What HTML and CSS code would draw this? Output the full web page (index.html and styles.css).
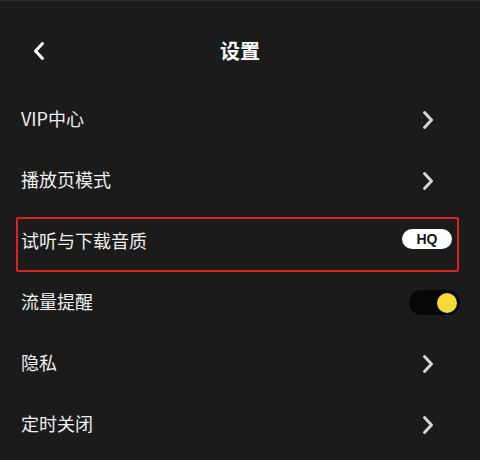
FILE: index.html
```html
<!DOCTYPE html>
<html lang="zh">
<head>
<meta charset="utf-8">
<link rel="stylesheet" href="styles.css">
</head>
<body>
<div class="screen">
  <header class="header">
    <div class="bar">
      <svg class="back" width="14" height="20" viewBox="0 0 14 20"><polyline points="10.5,2.5 3.5,10 10.5,17.5" fill="none" stroke="#fff" stroke-width="3" stroke-linecap="round" stroke-linejoin="round"/></svg>
      <div class="title">设置</div>
    </div>
  </header>
  <div class="list">
    <div class="row"><span class="label">VIP中心</span><svg class="chev" width="12" height="20" viewBox="0 0 12 20"><polyline points="2.5,2.5 9.5,10 2.5,17.5" fill="none" stroke="#d6d6d6" stroke-width="3" stroke-linecap="round" stroke-linejoin="round"/></svg></div>
    <div class="row"><span class="label">播放页模式</span><svg class="chev" width="12" height="20" viewBox="0 0 12 20"><polyline points="2.5,2.5 9.5,10 2.5,17.5" fill="none" stroke="#d6d6d6" stroke-width="3" stroke-linecap="round" stroke-linejoin="round"/></svg></div>
    <div class="row highlight"><span class="label">试听与下载音质</span><span class="pill">HQ</span></div>
    <div class="row"><span class="label">流量提醒</span><span class="toggle"><span class="knob"></span></span></div>
    <div class="row"><span class="label">隐私</span><svg class="chev" width="12" height="20" viewBox="0 0 12 20"><polyline points="2.5,2.5 9.5,10 2.5,17.5" fill="none" stroke="#d6d6d6" stroke-width="3" stroke-linecap="round" stroke-linejoin="round"/></svg></div>
    <div class="row"><span class="label">定时关闭</span><svg class="chev" width="12" height="20" viewBox="0 0 12 20"><polyline points="2.5,2.5 9.5,10 2.5,17.5" fill="none" stroke="#d6d6d6" stroke-width="3" stroke-linecap="round" stroke-linejoin="round"/></svg></div>
  </div>
</div>
</body>
</html>
```
FILE: styles.css
```css
html, body {
  margin: 0;
  padding: 0;
  background: #1b1b1b;
}
body {
  font-family: "Noto Sans CJK SC", "Noto Sans", sans-serif;
  color: #f2f2f2;
}
.screen {
  width: 480px;
  height: 460px;
  overflow: hidden;
  border-top: 1px solid #2c2c2c;
  box-sizing: border-box;
}
.header {
  height: 88px;
  padding-top: 37px;
  box-sizing: border-box;
}
.bar {
  position: relative;
  height: 26px;
  display: flex;
  align-items: center;
  justify-content: center;
}
.back {
  position: absolute;
  left: 32px;
  top: 3px;
}
.title {
  font-size: 20px;
  font-weight: 700;
  line-height: 26px;
  color: #ffffff;
}
.list {
  display: flex;
  flex-direction: column;
}
.row {
  position: relative;
  height: 61px;
  display: flex;
  align-items: center;
  justify-content: space-between;
  padding: 0 20px 0 21px;
  box-sizing: border-box;
}
.label {
  font-size: 18px;
  line-height: 24px;
  padding-bottom: 4px;
  color: #efefef;
}
.chev {
  margin-right: 26px;
}
.highlight::after {
  content: "";
  position: absolute;
  left: 16px;
  right: 21px;
  top: 6px;
  bottom: 0;
  border: 2px solid #d8231f;
  border-radius: 2px;
}
.pill {
  width: 50px;
  height: 20px;
  border-radius: 10px;
  background: #ffffff;
  color: #151515;
  font-family: "Liberation Sans", Arial, sans-serif;
  font-weight: 700;
  font-size: 14px;
  line-height: 20px;
  text-align: center;
  margin-right: 8px;
  margin-bottom: 6px;
}
.toggle {
  width: 51px;
  height: 25px;
  border-radius: 13px;
  background: #070707;
  display: flex;
  align-items: center;
  justify-content: flex-end;
  padding-right: 3px;
  box-sizing: border-box;
}
.knob {
  width: 20px;
  height: 20px;
  border-radius: 50%;
  background: #f6d93a;
}
```
